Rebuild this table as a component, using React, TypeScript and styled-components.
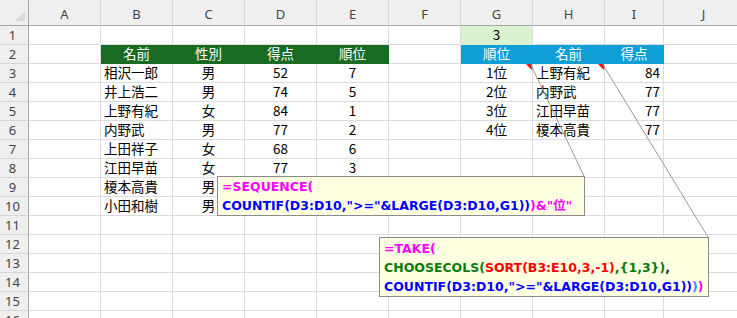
import React from 'react';
import styled, { createGlobalStyle, css } from 'styled-components';

const GlobalStyle = createGlobalStyle`
  html, body {
    margin: 0;
    padding: 0;
    background: #fff;
    overflow: hidden;
  }
`;

type Align = 'left' | 'center' | 'right';
type Tone = 'green' | 'blue' | 'mint';
type CellDef = { v: string; align?: Align; tone?: Tone; note?: boolean };

const COLS = ['A', 'B', 'C', 'D', 'E', 'F', 'G', 'H', 'I', 'J'];
const ROW_COUNT = 16;

const toneColors: Record<Tone, { bg: string; fg: string }> = {
  green: { bg: '#196b24', fg: '#ffffff' },
  blue: { bg: '#0f9ed5', fg: '#ffffff' },
  mint: { bg: '#daf2d0', fg: '#000000' },
};

const left = (v: string): CellDef => ({ v, align: 'left' });
const mid = (v: string): CellDef => ({ v, align: 'center' });
const right = (v: string): CellDef => ({ v, align: 'right' });
const head = (v: string, tone: Tone): CellDef => ({ v, align: 'center', tone });

const members: [string, string, string, string][] = [
  ['相沢一郎', '男', '52', '7'],
  ['井上浩二', '男', '74', '5'],
  ['上野有紀', '女', '84', '1'],
  ['内野武', '男', '77', '2'],
  ['上田祥子', '女', '68', '6'],
  ['江田早苗', '女', '77', '3'],
  ['榎本高貴', '男', '77', '4'],
  ['小田和樹', '男', '45', '8'],
];

const ranking: [string, string, string][] = [
  ['1位', '上野有紀', '84'],
  ['2位', '内野武', '77'],
  ['3位', '江田早苗', '77'],
  ['4位', '榎本高貴', '77'],
];

const sheet: Record<number, Record<string, CellDef>> = {
  1: { G: { v: '3', align: 'center', tone: 'mint' } },
  2: {
    B: head('名前', 'green'),
    C: head('性別', 'green'),
    D: head('得点', 'green'),
    E: head('順位', 'green'),
    G: head('順位', 'blue'),
    H: head('名前', 'blue'),
    I: head('得点', 'blue'),
  },
};

members.forEach(([name, sex, score, rank], i) => {
  const row = (sheet[i + 3] = sheet[i + 3] || {});
  row.B = left(name);
  row.C = mid(sex);
  row.D = mid(score);
  row.E = mid(rank);
});

ranking.forEach(([rank, name, score], i) => {
  const row = sheet[i + 3];
  row.G = { ...mid(rank), note: i === 0 };
  row.H = { ...left(name), note: i === 0 };
  row.I = right(score);
});

const Sheet = styled.div`
  position: relative;
  width: 737px;
  height: 318px;
  overflow: hidden;
  display: grid;
  grid-template-columns: 29px repeat(8, 72px) 59px 80px;
  grid-template-rows: 26px repeat(${ROW_COUNT}, 19px);
  font-family: 'Noto Sans CJK JP', 'Noto Sans', sans-serif;
`;

const Corner = styled.div`
  position: relative;
  box-sizing: border-box;
  background: #efefef;
  border-right: 1px solid #a8a8a8;
  border-bottom: 1px solid #a8a8a8;

  &::after {
    content: '';
    position: absolute;
    right: 3px;
    bottom: 4px;
    border-left: 10px solid transparent;
    border-bottom: 10px solid #dadada;
  }
`;

const ColHead = styled.div`
  box-sizing: border-box;
  background: #efefef;
  border-right: 1px solid #d6d6d6;
  border-bottom: 1px solid #a8a8a8;
  display: flex;
  align-items: center;
  justify-content: center;
  padding-top: 3px;
  font-family: 'Noto Sans', 'Open Sans', sans-serif;
  font-size: 13px;
  color: #444;
`;

const RowHead = styled.div`
  box-sizing: border-box;
  background: #efefef;
  border-right: 1px solid #a8a8a8;
  border-bottom: 1px solid #d6d6d6;
  display: flex;
  align-items: center;
  justify-content: center;
  padding-right: 3px;
  font-family: 'Noto Sans', 'Open Sans', sans-serif;
  font-size: 13px;
  color: #444;
`;

const Cell = styled.div<{ $align: Align; $tone?: Tone }>`
  position: relative;
  box-sizing: border-box;
  border-right: 1px solid #dcdcdc;
  border-bottom: 1px solid #dcdcdc;
  padding: 0 3px;
  display: flex;
  align-items: center;
  justify-content: ${p =>
    p.$align === 'left' ? 'flex-start' : p.$align === 'right' ? 'flex-end' : 'center'};
  font-size: 13.5px;
  line-height: 1;
  color: #000;
  white-space: nowrap;

  ${p =>
    p.$tone &&
    css`
      background: ${toneColors[p.$tone].bg};
      color: ${toneColors[p.$tone].fg};
      border-bottom-color: ${toneColors[p.$tone].bg};
      border-right-color: ${p.$tone === 'mint' ? '#dcdcdc' : toneColors[p.$tone].bg};
    `}
`;

const NoteMark = styled.span`
  position: absolute;
  top: 0;
  right: 0;
  border-left: 6px solid transparent;
  border-top: 6px solid #ff0000;
`;

const Connectors = styled.svg`
  position: absolute;
  left: 0;
  top: 0;
  pointer-events: none;
`;

const Callout = styled.div<{ $x: number; $y: number; $w: number; $padTop?: number }>`
  position: absolute;
  left: ${p => p.$x}px;
  top: ${p => p.$y}px;
  width: ${p => p.$w}px;
  box-sizing: border-box;
  padding: ${p => p.$padTop || 0}px 4px 0 4px;
  background: #ffffe1;
  border: 1px solid #8a8a8a;
  font-family: 'DejaVu Sans', 'Noto Sans CJK JP', sans-serif;
  font-weight: 700;
  font-size: 12.5px;
`;

const FormulaLine = styled.div`
  height: 19px;
  line-height: 19px;
  white-space: nowrap;
`;

const Tok = styled.span<{ $c: string }>`
  color: ${p => p.$c};
`;

const PINK = '#ff00ff';
const BLUE = '#0000ff';
const SKY = '#3d8bff';
const GREEN = '#0a7a0a';
const RED = '#ff0000';

const App: React.FC = () => {
  const cells: React.ReactNode[] = [<Corner key="corner" />];
  COLS.forEach(col => cells.push(<ColHead key={`h${col}`}>{col}</ColHead>));

  for (let r = 1; r <= ROW_COUNT; r++) {
    cells.push(<RowHead key={`r${r}`}>{r}</RowHead>);
    COLS.forEach(col => {
      const def = sheet[r]?.[col];
      cells.push(
        <Cell key={`${col}${r}`} $align={def?.align || 'left'} $tone={def?.tone}>
          {def?.v}
          {def?.note && <NoteMark />}
        </Cell>
      );
    });
  }

  return (
    <>
      <GlobalStyle />
      <Sheet>
        {cells}
        <Connectors width={737} height={318}>
          <line x1={530.5} y1={64} x2={584} y2={176} stroke="#9a9a9a" strokeWidth={1} />
          <line x1={602.5} y1={64} x2={708} y2={237} stroke="#9a9a9a" strokeWidth={1} />
        </Connectors>
        <Callout $x={217} $y={176} $w={368}>
          <FormulaLine>
            <Tok $c={PINK}>=SEQUENCE(</Tok>
          </FormulaLine>
          <FormulaLine>
            <Tok $c={BLUE}>COUNTIF(D3:D10,"&gt;="&amp;LARGE(D3:D10,G1))</Tok>
            <Tok $c={PINK}>)&amp;"位"</Tok>
          </FormulaLine>
        </Callout>
        <Callout $x={379} $y={237} $w={330} $padTop={1}>
          <FormulaLine>
            <Tok $c={PINK}>=TAKE(</Tok>
          </FormulaLine>
          <FormulaLine>
            <Tok $c={GREEN}>CHOOSECOLS(</Tok>
            <Tok $c={RED}>SORT(B3:E10,3,-1)</Tok>
            <Tok $c={GREEN}>,{'{1,3}'})</Tok>
            <Tok $c="#222">,</Tok>
          </FormulaLine>
          <FormulaLine>
            <Tok $c={BLUE}>COUNTIF(D3:D10,"&gt;="&amp;LARGE(D3:D10,G1))</Tok>
            <Tok $c={SKY}>)</Tok>
            <Tok $c={PINK}>)</Tok>
          </FormulaLine>
        </Callout>
      </Sheet>
    </>
  );
};

export default App;
